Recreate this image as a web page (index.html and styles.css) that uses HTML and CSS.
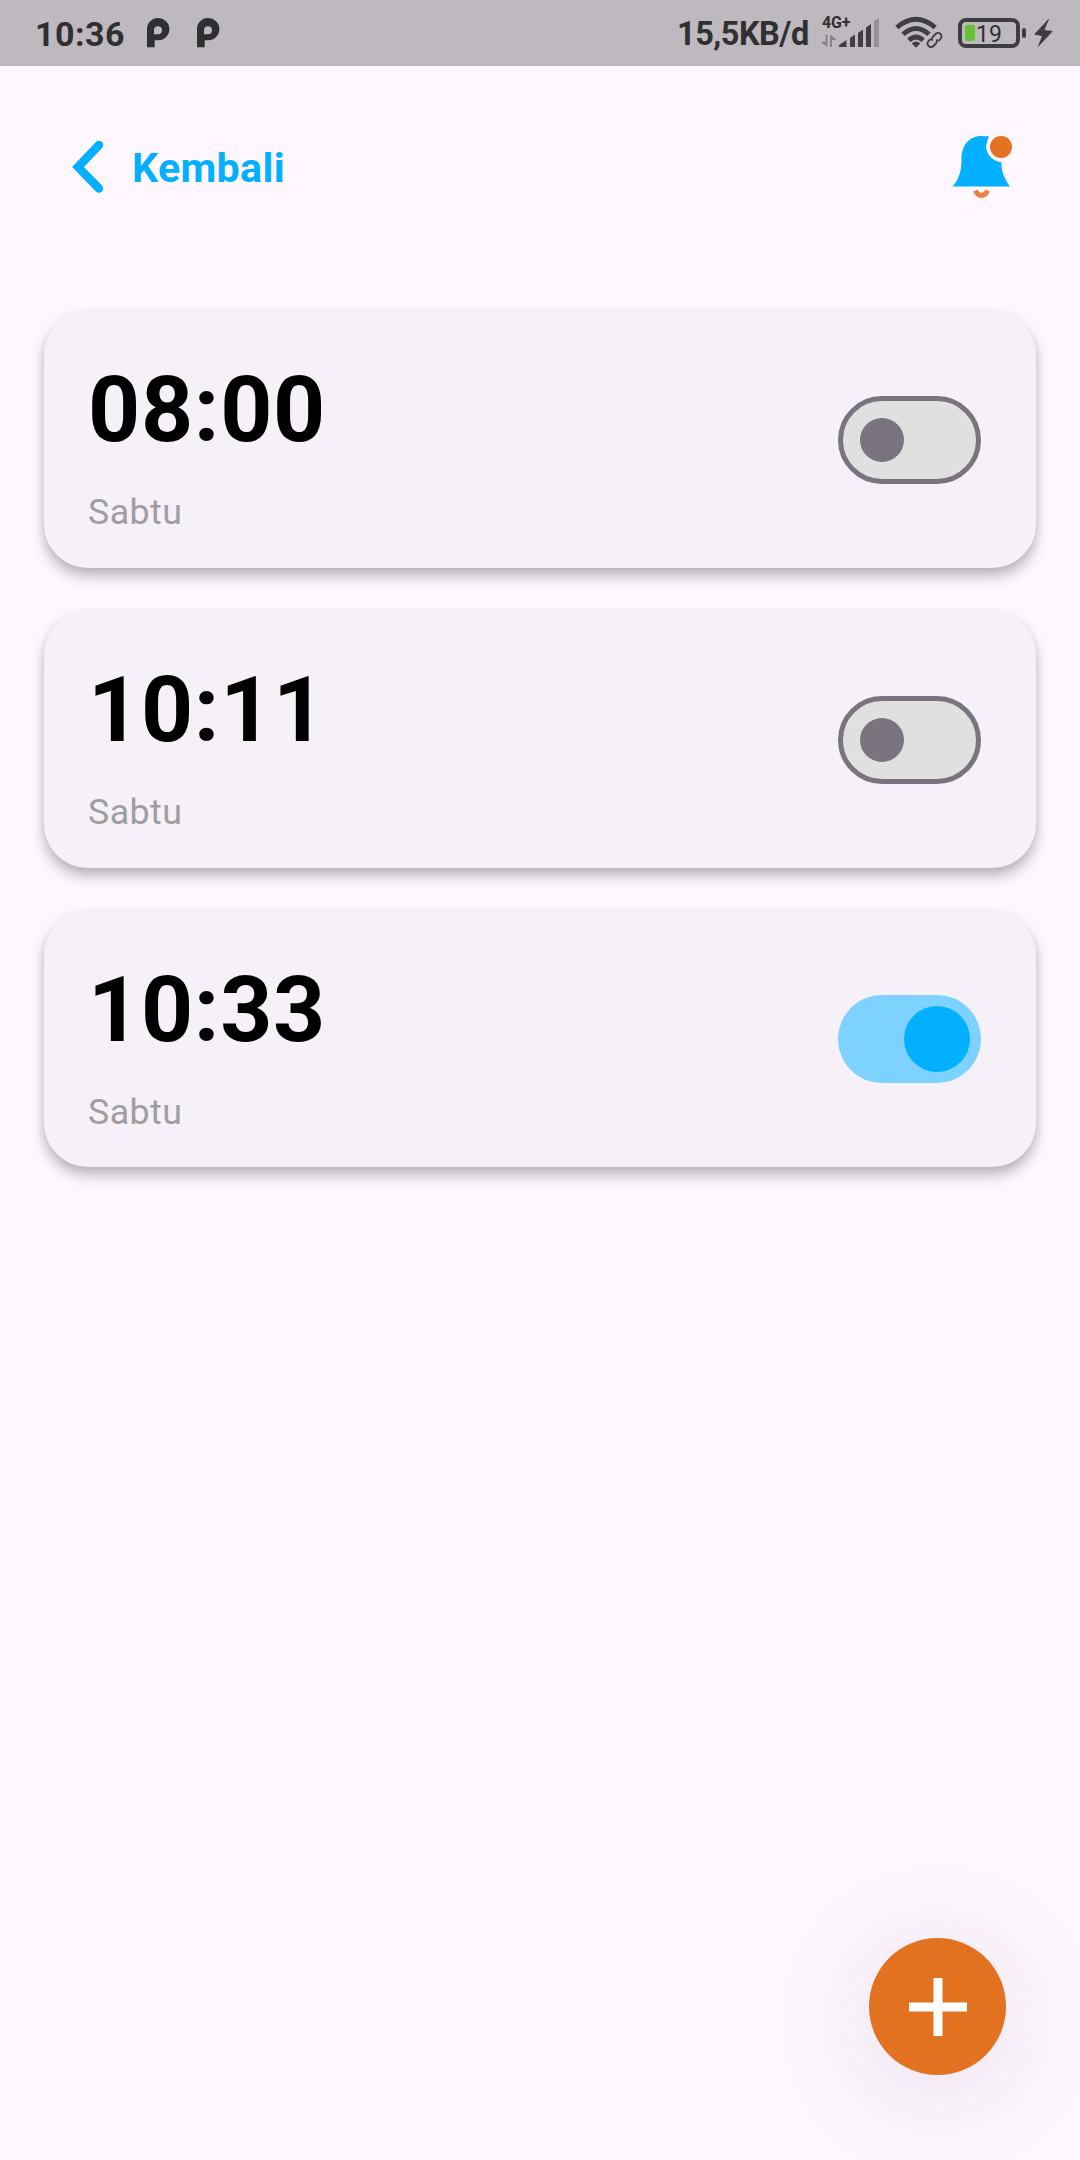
FILE: index.html
```html
<!DOCTYPE html>
<html lang="id">
<head>
<meta charset="utf-8">
<title>Alarm</title>
<link rel="stylesheet" href="styles.css">
</head>
<body>
<div class="screen">
  <div class="status-bar">
    <span class="clock">10:36</span>
    <svg class="app-icon" viewBox="0 0 24 30"><path fill-rule="evenodd" d="M1 29.300V12A11.200 11.200 0 1 1 12 22.300H8.700V29.300ZM12 8.200A4 4 0 0 0 8 12.200V16.200H12A4 4 0 0 0 12 8.200Z"/></svg>
    <svg class="app-icon" viewBox="0 0 24 30"><path fill-rule="evenodd" d="M1 29.300V12A11.200 11.200 0 1 1 12 22.300H8.700V29.300ZM12 8.200A4 4 0 0 0 8 12.200V16.200H12A4 4 0 0 0 12 8.200Z"/></svg>
    <span class="speed">15,5KB/d</span>
    <div class="signal">
      <span class="network">4G+</span>
      <svg class="bars" viewBox="0 0 57 30">
        <path class="arrows" d="M3.500 -0.500H5.500V12L0 8V6.500H3.500ZM8 12V-0.500L13.500 3.500V5H10V12Z"/>
        <path d="M17 12V10L24.500 5V12ZM28 12V3L33 -0.500V12ZM36 12V-2L41 -5.500V12ZM44 12V-7.500L49 -11V12Z"/>
        <path class="faint" d="M52 12V-14L57 -17V12Z"/>
      </svg>
    </div>
    <svg class="wifi" viewBox="0 0 48 32">
      <g class="wifi-arcs"><path d="M1.800 10.500Q21 -6 40.200 10.500"/><path d="M8 17.300Q21 5.500 34 17.300"/><path d="M13.800 23.300Q21 16.500 28.200 23.300"/></g>
      <path d="M21 30.800L16.700 26.500Q21 22.500 25.300 26.500Z"/>
      <g class="chain" transform="translate(39.500 23) rotate(-45)"><path d="M-2 -3.500H-5A3.500 3.500 0 0 0 -5 3.500H-1A3.500 3.500 0 0 0 2 1"/><path d="M2 3.500H5A3.500 3.500 0 0 0 5 -3.500H1A3.500 3.500 0 0 0 -2 -1"/></g>
    </svg>
    <div class="battery"><span class="charge"></span><span class="level">19</span></div>
    <span class="battery-tip"></span>
    <svg class="bolt" viewBox="0 0 19 30"><path d="M15.500 0L0 16.500L8 18L3.500 29.500L19 13L10.500 12Z"/></svg>
  </div>

  <header class="header">
    <a class="back">
      <svg class="chevron" viewBox="0 0 32 54"><path d="M26 5L5 27L26 48.500"/></svg>
      <span class="back-label">Kembali</span>
    </a>
    <svg class="bell" viewBox="0 0 60 64">
      <path class="bell-body" d="M0.500 51.500C7 44 9.500 36 9.500 25C9 9 19 -0.500 32 1.200H37C35 7 33 11 35 16C37 22 42 26 49.500 27.500C49 36 52.500 44 58 51.500Z"/>
      <circle class="bell-dot" cx="49" cy="12" r="11"/>
      <path class="clapper" d="M23.500 55.500C26 62 33 62 35.500 55.500"/>
    </svg>
  </header>

  <main class="alarms">
    <section class="card">
      <div><div class="time">08:00</div><div class="day">Sabtu</div></div>
      <div class="switch"><span class="thumb"></span></div>
    </section>
    <section class="card">
      <div><div class="time">10:11</div><div class="day">Sabtu</div></div>
      <div class="switch"><span class="thumb"></span></div>
    </section>
    <section class="card">
      <div><div class="time">10:33</div><div class="day">Sabtu</div></div>
      <div class="switch on"><span class="thumb"></span></div>
    </section>
  </main>

  <div class="add">
    <svg viewBox="0 0 60 60"><path d="M30 1V59M1 30H59"/></svg>
  </div>
</div>
</body>
</html>
```
FILE: styles.css
```css
* { box-sizing: border-box; }
body { margin: 0; font-family: Roboto, sans-serif; }
svg { display: block; flex: none; overflow: visible; }
.screen {
  width: 1080px;
  height: 2160px;
  background: #fef7ff;
  display: flex;
  flex-direction: column;
  overflow: hidden;
}

.status-bar {
  height: 66px;
  flex: none;
  background: #beb9bf;
  color: #302f31;
  fill: #302f31;
  display: flex;
  align-items: flex-start;
  padding-left: 35px;
}
.clock, .speed { font-weight: 700; line-height: 40px; margin-top: 14px; white-space: nowrap; }
.clock { width: 111px; font-size: 34px; letter-spacing: 0.500px; }
.app-icon { width: 24px; height: 30px; margin: 18px 26px 0 0; }
.speed { margin-left: 431px; width: 145px; font-size: 32.500px; letter-spacing: -0.500px; }
.signal { width: 57px; height: 66px; display: flex; flex-direction: column; }
.network { font-size: 16px; font-weight: 700; line-height: 18px; margin-top: 14px; letter-spacing: -0.200px; }
.bars { width: 57px; height: 30px; margin-top: 3px; fill: #3f3c42; }
.faint { fill: #969198; }
.arrows { fill: #88838a; }
.wifi { width: 48px; height: 32px; margin: 17px 0 0 16px; fill: #3f3c42; }
.wifi-arcs { fill: none; stroke: #3f3c42; stroke-width: 4.800px; }
.chain { fill: none; stroke: #3f3c42; stroke-width: 1.800px; }
.battery {
  width: 62px;
  height: 30px;
  margin: 18px 0 0 15px;
  border: 4px solid #3f3c42;
  border-radius: 8px;
  display: flex;
  align-items: center;
  padding-left: 3px;
}
.charge { width: 10px; height: 16px; border-radius: 2px; background: #67c232; }
.level { font-size: 23px; line-height: 24px; margin-left: 1px; padding-top: 3px; }
.battery-tip { width: 4px; height: 10px; border-radius: 2px; background: #3f3c42; margin: 28px 0 0 2px; }
.bolt { width: 19px; height: 30px; margin: 18px 0 0 8px; fill: #3f3c42; }

.header {
  height: 245px;
  flex: none;
  display: flex;
  justify-content: space-between;
  align-items: flex-start;
  padding: 69px 68px 0 73px;
}
.back { display: flex; align-items: center; height: 64px; }
.chevron { width: 32px; height: 54px; fill: none; stroke: #03b0ff; stroke-width: 8.500px; stroke-linecap: round; }
.back-label { margin: 2px 0 0 27px; font-size: 41.250px; font-weight: 700; line-height: 48px; letter-spacing: 0.300px; color: #03b0ff; }
.bell { width: 60px; height: 64px; }
.bell-body { fill: #03b0ff; }
.bell-dot { fill: #e57220; }
.clapper { fill: none; stroke: #e98445; stroke-width: 5px; }

.alarms { padding: 0 44px; display: flex; flex-direction: column; gap: 43px; }
.card {
  height: 256.750px;
  border-radius: 44px;
  background: #f6f1f9;
  box-shadow: 0 8px 14px rgba(0, 0, 0, 0.260), 0 3px 8px rgba(0, 0, 0, 0.050);
  display: flex;
  justify-content: space-between;
  align-items: flex-start;
  padding: 47px 55px 0 44px;
}
.time { font-size: 91px; font-weight: 700; line-height: 103px; padding-top: 1px; letter-spacing: 0.700px; color: #000; }
.day { font-size: 35.750px; line-height: 42px; margin-top: 29px; letter-spacing: 0.450px; color: #9e9e9e; }
.switch {
  width: 143px;
  height: 88px;
  margin-top: 37.750px;
  border: 5.500px solid #79747e;
  border-radius: 44px;
  background: #e0e0e0;
  display: flex;
  align-items: center;
  padding-left: 17px;
}
.thumb { width: 44px; height: 44px; border-radius: 50%; background: #79747e; }
.on { border: none; background: #7dd2ff; justify-content: flex-end; padding: 0 11px 0 0; }
.on .thumb { width: 66px; height: 66px; background: #03b0ff; }

.add {
  width: 137px;
  height: 137px;
  margin: auto 74px 85px auto;
  border-radius: 50%;
  background: #e37220;
  box-shadow: 0 14px 110px rgba(60, 40, 70, 0.130);
  display: flex;
  align-items: center;
  justify-content: center;
}
.add svg { width: 60px; height: 60px; fill: none; stroke: #fff; stroke-width: 9px; }
```
